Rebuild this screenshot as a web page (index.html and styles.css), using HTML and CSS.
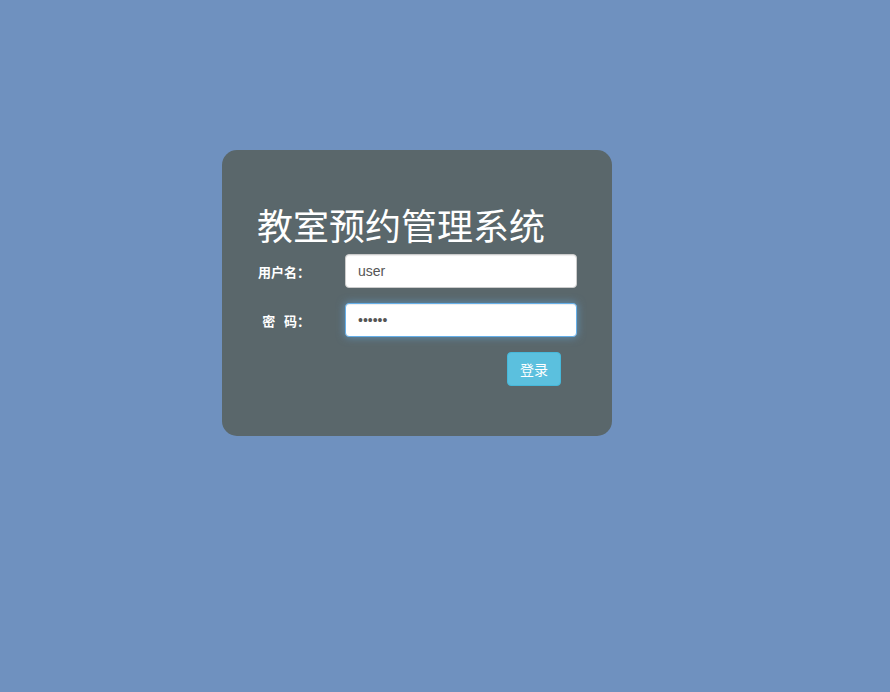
FILE: index.html
```
<!DOCTYPE html>
<html lang="zh">
<head>
<meta charset="utf-8">
<title>教室预约管理系统</title>
<link rel="stylesheet" href="styles.css">
</head>
<body>
<div class="page">
  <div class="card">
    <h1 class="title">教室预约管理系统</h1>
    <form class="form">
      <div class="row">
        <label class="label">用户名：</label>
        <input class="input" type="text" value="user">
      </div>
      <div class="row">
        <label class="label">密&nbsp;&nbsp;&nbsp;码：</label>
        <input class="input focused" type="password" value="123456">
      </div>
      <div class="actions">
        <button class="btn" type="button">登录</button>
      </div>
    </form>
  </div>
</div>
</body>
</html>
```

FILE: styles.css
```
html, body {
  margin: 0;
  padding: 0;
  height: 100%;
}
body {
  background: #6f91bf;
  font-family: "Liberation Sans", "Noto Sans CJK SC", sans-serif;
  font-size: 14px;
  color: #333;
}
.page {
  padding-top: 150px;
  padding-left: 222px;
}
.card {
  width: 320px;
  padding: 35px;
  background: #5a676b;
  border-radius: 15px;
}
.title {
  margin: 20px 0 10px;
  font-family: "Noto Sans CJK SC", sans-serif;
  font-size: 36px;
  font-weight: normal;
  line-height: 39px;
  color: #fff;
}
.form {
  margin: 0;
}
.row {
  display: grid;
  grid-template-columns: 88px 1fr;
  align-items: center;
  margin-bottom: 15px;
}
.label {
  width: 53px;
  text-align: right;
  font-family: "Noto Sans CJK SC", sans-serif;
  font-size: 13px;
  font-weight: bold;
  color: #fff;
  white-space: nowrap;
}
.input {
  box-sizing: border-box;
  height: 34px;
  width: 100%;
  padding: 6px 12px;
  border: 1px solid #ccc;
  border-radius: 4px;
  background: #fff;
  font-family: "Liberation Sans", sans-serif;
  font-size: 14px;
  color: #555;
  box-shadow: inset 0 1px 1px rgba(0,0,0,.075);
  outline: none;
}
.input.focused {
  border-color: #66afe9;
  box-shadow: inset 0 1px 1px rgba(0,0,0,.075), 0 0 8px rgba(102,175,233,.6);
}
.actions {
  display: flex;
  justify-content: flex-end;
  padding-right: 16px;
  margin-bottom: 15px;
}
.btn {
  box-sizing: border-box;
  height: 34px;
  width: 54px;
  padding: 6px 12px;
  border: 1px solid #46b8da;
  border-radius: 4px;
  background: #5bc0de;
  color: #fff;
  font-family: "Noto Sans CJK SC", sans-serif;
  font-size: 14px;
  line-height: 20px;
}
```
